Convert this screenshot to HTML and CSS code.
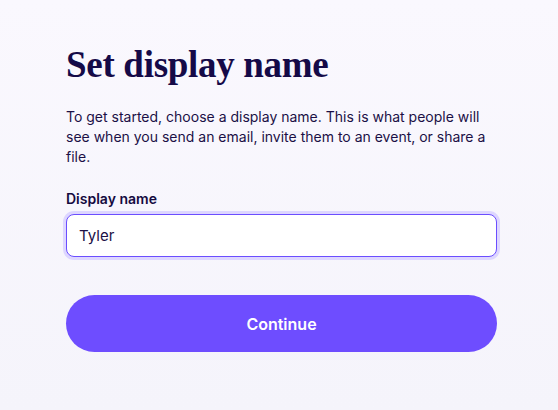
FILE: index.html
```html
<!DOCTYPE html>
<html lang="en">
<head>
<meta charset="utf-8">
<link rel="stylesheet" href="styles.css">
</head>
<body>
<main class="page">
  <h1 class="title">Set display name</h1>
  <p class="intro">To get started, choose a display name. This is what people will see when you send an email, invite them to an event, or share a file.</p>
  <label class="label" for="dn">Display name</label>
  <div class="field"><input id="dn" class="input" type="text" value="Tyler"></div>
  <button class="btn" type="button">Continue</button>
</main>
</body>
</html>
```
FILE: styles.css
```css
html, body { margin: 0; padding: 0; }
body {
  width: 558px;
  height: 410px;
  background: linear-gradient(180deg, #faf8fe 0%, #f5f4fb 100%);
  font-family: Inter, "Noto Sans", sans-serif;
  color: #1b1046;
}
.page {
  padding: 38.5px 61px 0 66px;
  display: flex;
  flex-direction: column;
}
.title {
  margin: 0;
  font-family: "Liberation Serif", serif;
  font-weight: 700;
  font-size: 37px;
  line-height: 52px;
  letter-spacing: -0.3px;
  color: #150a48;
}
.intro {
  margin: 16.5px 0 0;
  font-size: 14px;
  line-height: 20px;
  color: #1b1046;
}
.label {
  margin-top: 22px;
  font-size: 14px;
  font-weight: 600;
  line-height: 20px;
  color: #150a3f;
}
.field {
  margin-top: 5px;
}
.input {
  box-sizing: border-box;
  width: 100%;
  height: 43px;
  border: 1px solid #6b4eff;
  border-radius: 8px;
  box-shadow: 0 0 0 3px #ddd6ff;
  background: #fff;
  padding: 0 12px;
  font-family: Inter, sans-serif;
  font-size: 15px;
  color: #1b1046;
  outline: none;
}
.btn {
  margin-top: 38px;
  height: 57px;
  border: none;
  border-radius: 29px;
  background: #6e4dff;
  color: #fff;
  font-family: Inter, sans-serif;
  font-size: 16px;
  font-weight: 600;
}
```
